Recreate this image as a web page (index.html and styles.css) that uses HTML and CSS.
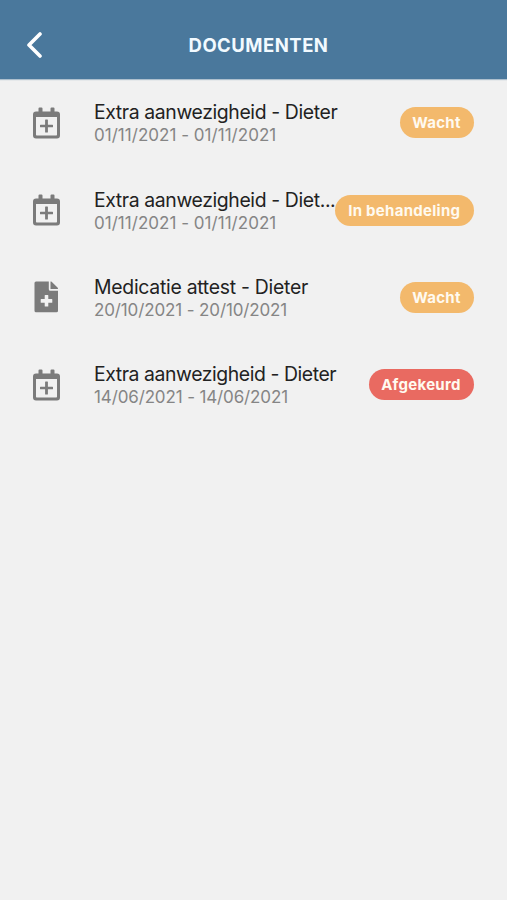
FILE: index.html
```html
<!DOCTYPE html>
<html lang="nl">
<head>
<meta charset="utf-8">
<title>Documenten</title>
<link rel="stylesheet" href="styles.css">
</head>
<body>
<svg class="symbols" aria-hidden="true">
<symbol id="calendar" viewBox="0 0 29 32"><path fill-rule="evenodd" d="M6.5 1.5a1 1 0 0 1 1-1h2a1 1 0 0 1 1 1v3h8v-3a1 1 0 0 1 1-1h2a1 1 0 0 1 1 1v3H25a3 3 0 0 1 3 3v21a3 3 0 0 1-3 3H4a3 3 0 0 1-3-3v-21a3 3 0 0 1 3-3h2.500zM4 10v17.800a.7.7 0 0 0 .7.7h19.600a.7.7 0 0 0 .7-.7V10zM13.600 12.500h1.800a.5.5 0 0 1 .5.5v4.700h4.600a.5.5 0 0 1 .5.5v1.600a.5.5 0 0 1-.5.5h-4.600V25a.5.5 0 0 1-.5.5h-1.800a.5.5 0 0 1-.5-.5v-4.700H8.500a.5.5 0 0 1-.5-.5v-1.600a.5.5 0 0 1 .5-.5h4.600V13a.5.5 0 0 1 .5-.5z"/></symbol>
<symbol id="file" viewBox="0 0 29 32"><path fill-rule="evenodd" d="M4 .5h12.800v7.700A1.500 1.500 0 0 0 18.300 9.700H26v20a1.500 1.500 0 0 1-1.500 1.500H4a1.500 1.500 0 0 1-1.500-1.500V2A1.500 1.500 0 0 1 4 .5zM13.200 14a.5.5 0 0 0-.5.5v3.400H9.200a.5.5 0 0 0-.5.5v2.800a.5.5 0 0 0 .5.5h3.500v3.400a.5.5 0 0 0 .5.5h2.600a.5.5 0 0 0 .5-.5v-3.400h3.500a.5.5 0 0 0 .5-.5v-2.800a.5.5 0 0 0-.5-.5h-3.500v-3.400a.5.5 0 0 0-.5-.5zM18.500.5c.6 0 1 .1 1.400.5l5.600 5.600c.3.3.5.8.5 1.300h-7.500z"/></symbol>
</svg>
<header class="header">
<svg class="back" viewBox="0 0 16 26"><path d="M14 2L3 13l11 11"/></svg>
<h1 class="heading">DOCUMENTEN</h1>
</header>
<main class="list">
<article class="row"><svg class="icon"><use href="#calendar"/></svg><div class="info"><h2 class="title">Extra aanwezigheid - Dieter</h2><p class="date">01/11/2021 - 01/11/2021</p></div><span class="badge wait">Wacht</span></article>
<article class="row"><svg class="icon"><use href="#calendar"/></svg><div class="info"><h2 class="title">Extra aanwezigheid - Diet...</h2><p class="date">01/11/2021 - 01/11/2021</p></div><span class="badge progress">In behandeling</span></article>
<article class="row"><svg class="icon"><use href="#file"/></svg><div class="info"><h2 class="title medical">Medicatie attest - Dieter</h2><p class="date tight">20/10/2021 - 20/10/2021</p></div><span class="badge wait">Wacht</span></article>
<article class="row"><svg class="icon"><use href="#calendar"/></svg><div class="info"><h2 class="title last">Extra aanwezigheid - Dieter</h2><p class="date tight">14/06/2021 - 14/06/2021</p></div><span class="badge rejected">Afgekeurd</span></article>
</main>
</body>
</html>
```
FILE: styles.css
```css
* { box-sizing: border-box; }
body { margin: 0; min-height: 900px; background: #f1f1f1; font-family: Inter, sans-serif; }
.symbols { display: none; }
.header { height: 79px; background: #4a789c; display: grid; grid-template-columns: 70px 1fr 60px; align-items: center; padding-top: 11px; box-shadow: 0 1px 1px #4a789c66; }
.back { width: 16px; height: 26px; margin-left: 26px; fill: none; stroke: #fff; stroke-width: 3.6; stroke-linecap: round; stroke-linejoin: round; }
.heading { margin: 0; color: #f2faff; font-size: 18.5px; line-height: 24px; font-weight: 700; letter-spacing: .48px; text-align: center; }
.row { height: 87.4px; padding: 0 33.5px 0 32px; display: grid; grid-template-columns: 29px 1fr auto; align-items: center; }
.icon { width: 29px; height: 32px; fill: #7b7b7b; }
.info { margin-left: 33px; min-width: 0; white-space: nowrap; padding-top: 2px; }
.title { margin: 0; font-size: 19.4px; line-height: 23px; font-weight: 400; letter-spacing: -.38px; color: #222; }
.medical { letter-spacing: -.27px; }
.last { letter-spacing: -.42px; }
.date { margin: 0; font-size: 17px; line-height: 22px; letter-spacing: .03px; color: #858585; }
.tight { letter-spacing: -.13px; }
.badge { height: 31px; border-radius: 16px; color: #fffaf0; background: #f3b96c; font-size: 15px; line-height: 32px; font-weight: 700; letter-spacing: .28px; text-align: center; white-space: nowrap; }
.wait { width: 74px; }
.progress { width: 138.5px; }
.rejected { width: 105px; background: #e96a61; }
```
